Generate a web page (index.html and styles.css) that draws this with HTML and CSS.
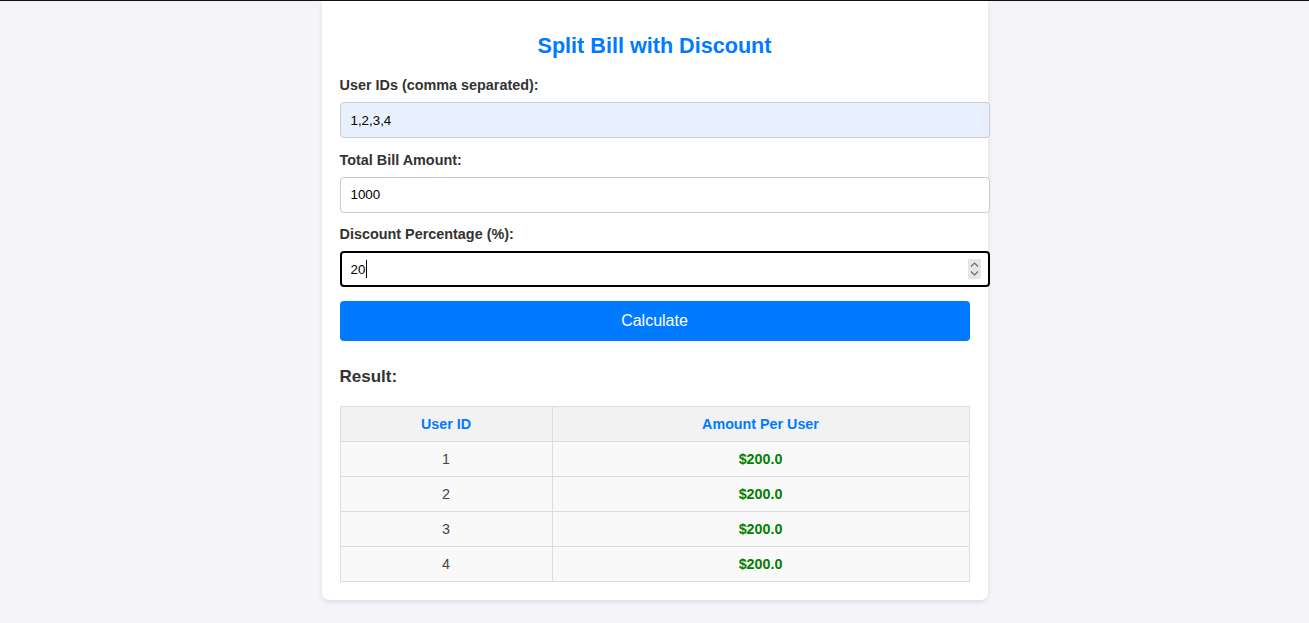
FILE: index.html
```html
<!DOCTYPE html>
<html lang="en">
<head>
<meta charset="utf-8">
<title>Split Bill with Discount</title>
<link rel="stylesheet" href="styles.css">
</head>
<body>
<div class="topline"></div>
<div class="card">
  <h2 class="title">Split Bill with Discount</h2>
  <form class="form">
    <label class="label" for="ids">User IDs (comma separated):</label>
    <input class="input input-autofill" id="ids" type="text" value="1,2,3,4">
    <label class="label" for="total">Total Bill Amount:</label>
    <input class="input" id="total" type="text" value="1000">
    <label class="label" for="disc">Discount Percentage (%):</label>
    <div class="field">
      <input class="input input-focus" id="disc" type="text" value="20">
      <span class="caret"></span>
      <span class="spinner">
        <svg width="9" height="7" viewBox="0 0 9 7"><path d="M1 5.5 L4.5 2 L8 5.5" fill="none" stroke="#6b6b6b" stroke-width="1.2"/></svg>
        <svg width="9" height="7" viewBox="0 0 9 7"><path d="M1 1.5 L4.5 5 L8 1.5" fill="none" stroke="#6b6b6b" stroke-width="1.2"/></svg>
      </span>
    </div>
    <button class="button" type="button">Calculate</button>
  </form>
  <h3 class="result-title">Result:</h3>
  <table class="table">
    <thead>
      <tr><th class="col-id">User ID</th><th>Amount Per User</th></tr>
    </thead>
    <tbody>
      <tr><td>1</td><td class="amount">$200.0</td></tr>
      <tr><td>2</td><td class="amount">$200.0</td></tr>
      <tr><td>3</td><td class="amount">$200.0</td></tr>
      <tr><td>4</td><td class="amount">$200.0</td></tr>
    </tbody>
  </table>
</div>
</body>
</html>
```
FILE: styles.css
```css
html, body {
  margin: 0;
  padding: 0;
}
body {
  background: #f4f4f9;
  font-family: "Liberation Sans", Arial, sans-serif;
  color: #333;
  min-height: 623px;
}
.topline {
  height: 1px;
  background: #111;
}
.card {
  width: 630px;
  margin: 0 auto;
  background: #fff;
  padding: 32px 18px 18px;
  border-radius: 0 0 7px 7px;
  box-shadow: 0 2px 5px rgba(0, 0, 0, 0.1);
}
.title {
  margin: 0 0 18px;
  font-size: 21.6px;
  line-height: 26px;
  font-weight: bold;
  color: #007bff;
  text-align: center;
}
.form {
  display: flex;
  flex-direction: column;
  align-items: flex-start;
}
.label {
  display: block;
  font-size: 14.4px;
  line-height: 16px;
  font-weight: bold;
  color: #333;
  margin-bottom: 9px;
}
.input {
  box-sizing: border-box;
  width: 650px;
  height: 36px;
  margin: 0 0 13.5px;
  padding: 0 10px;
  border: 1px solid #ccc;
  border-radius: 4px;
  font-family: "Liberation Sans", Arial, sans-serif;
  font-size: 13.33px;
  color: #000;
  background: #fff;
  outline: none;
}
.input-autofill {
  background: #e8f0fe;
}
.field {
  position: relative;
  width: 650px;
  height: 36px;
  margin-bottom: 14px;
}
.field .input {
  margin: 0;
}
.input-focus {
  border: 2px solid #000;
  padding: 0 9px;
}
.caret {
  position: absolute;
  left: 26px;
  top: 9px;
  width: 1px;
  height: 18px;
  background: #000;
}
.spinner {
  position: absolute;
  right: 9px;
  top: 8px;
  width: 13px;
  height: 20px;
  background: #e6e6e6;
  display: flex;
  flex-direction: column;
  align-items: center;
  justify-content: center;
  gap: 2px;
}
.spinner svg {
  display: block;
}
.button {
  width: 630px;
  height: 40px;
  border: none;
  border-radius: 4px;
  background: #007bff;
  color: #fff;
  font-family: "Liberation Sans", Arial, sans-serif;
  font-size: 16px;
  padding: 0;
}
.result-title {
  margin: 26px 0 19px;
  font-size: 17px;
  line-height: 20px;
  font-weight: bold;
  color: #333;
}
.table {
  width: 630px;
  border-collapse: collapse;
  font-size: 14.3px;
}
.table th,
.table td {
  border: 1px solid #ddd;
  padding: 8px;
  line-height: 18px;
  text-align: center;
}
.table th {
  background: #f2f2f2;
  color: #007bff;
  font-weight: bold;
}
.table td {
  background: #f9f9f9;
  color: #444;
}
.col-id {
  width: 195px;
}
.table td.amount {
  color: #008000;
  font-weight: bold;
}
```
